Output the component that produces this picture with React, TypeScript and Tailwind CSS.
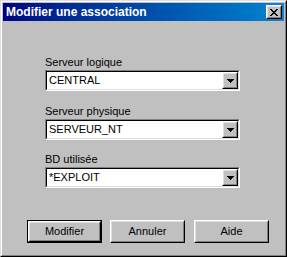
const font = { fontFamily: '"Liberation Sans", Arial, sans-serif' };

function CloseGlyph() {
  const rows = ["11000011", "01100110", "00111100", "00011000", "00111100", "01100110", "11000011"];
  return (
    <svg width="8" height="7" viewBox="0 0 8 7" shapeRendering="crispEdges">
      {rows.map((row, y) =>
        row.split("").map((c, x) =>
          c === "1" ? <rect key={`${x}-${y}`} x={x} y={y} width="1" height="1" fill="#000" /> : null
        )
      )}
    </svg>
  );
}

function Raised({ className, children }: { className?: string; children?: React.ReactNode }) {
  return (
    <div className={`border border-t-white border-l-white border-b-black border-r-black ${className ?? ""}`}>
      <div className="h-full w-full border border-t-[#dfdfdf] border-l-[#dfdfdf] border-b-[#808080] border-r-[#808080] bg-[#c0c0c0] flex items-center justify-center">
        {children}
      </div>
    </div>
  );
}

function Combo({ value }: { value: string }) {
  return (
    <div className="w-[195px] h-[21px] border border-t-[#808080] border-l-[#808080] border-b-white border-r-white">
      <div className="h-full border border-t-black border-l-black border-b-[#dfdfdf] border-r-[#dfdfdf] bg-white flex items-center">
        <span className="flex-1 pl-[2px] text-[11px] leading-[13px] text-black">{value}</span>
        <Raised className="w-[16px] h-[17px]">
          <svg width="7" height="4" viewBox="0 0 7 4" shapeRendering="crispEdges">
            <path d="M0 0h7v1H0zM1 1h5v1H1zM2 2h3v1H2zM3 3h1v1H3z" fill="#000" />
          </svg>
        </Raised>
      </div>
    </div>
  );
}

function Field({ label, value, className }: { label: string; value: string; className?: string }) {
  return (
    <div className={`flex flex-col gap-[1px] ${className ?? ""}`}>
      <span className="text-[11px] leading-[13px] text-black">{label}</span>
      <Combo value={value} />
    </div>
  );
}

function Button({ label, primary }: { label: string; primary?: boolean }) {
  const inner = (
    <Raised className="w-full h-full">
      <span className="text-[11px] leading-[13px] text-black">{label}</span>
    </Raised>
  );
  if (primary) {
    return <div className="w-[75px] h-[23px] border border-black">{inner}</div>;
  }
  return <div className="w-[75px] h-[23px]">{inner}</div>;
}

export default function App() {
  return (
    <div style={font} className="w-[287px] h-[257px] border border-t-[#dfdfdf] border-l-[#dfdfdf] border-b-black border-r-black">
      <div className="h-full border border-t-white border-l-white border-b-[#808080] border-r-[#808080] bg-[#c0c0c0] p-[1px] flex flex-col">
        <div className="h-[18px] bg-linear-to-r from-[#000080] to-[#1084d0] flex items-center justify-between pl-[3px] pr-[2px]">
          <span className="text-[12px] leading-[14px] font-bold text-white">Modifier une association</span>
          <Raised className="w-[16px] h-[14px]">
            <CloseGlyph />
          </Raised>
        </div>
        <div className="flex flex-col pl-[42px] pt-[35px]">
          <Field label="Serveur logique" value="CENTRAL" />
          <Field label="Serveur physique" value="SERVEUR_NT" className="mt-[14px]" />
          <Field label="BD utilisée" value="*EXPLOIT" className="mt-[13px]" />
        </div>
        <div className="flex pl-[24px] pt-[32px] gap-[8px]">
          <Button label="Modifier" primary />
          <Button label="Annuler" />
          <div className="ml-[1px]">
            <Button label="Aide" />
          </div>
        </div>
      </div>
    </div>
  );
}
